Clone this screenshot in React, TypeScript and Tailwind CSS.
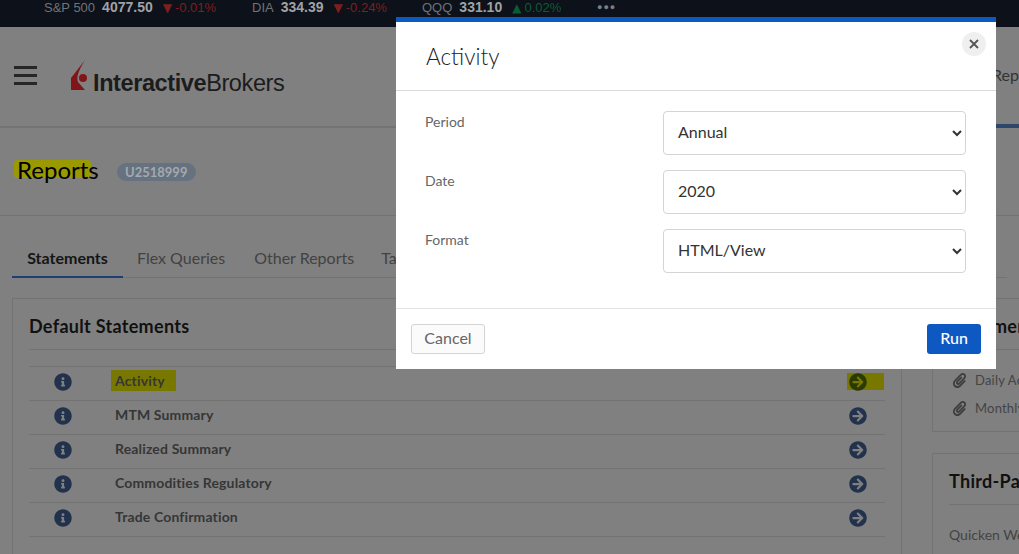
import { FaInfoCircle, FaArrowCircleRight, FaPaperclip } from "react-icons/fa";

const font = "font-['Lato','Noto_Sans',sans-serif]";

function Tick(p: { n: string; v: string; c: string; pct: string; up?: boolean; w: string }) {
  return (
    <div className={`flex items-center ${p.w}`}>
      <span className="text-[#6f7379] mr-[7px]">{p.n}</span>
      <span className="text-[#a0a2a5] text-[14px] font-bold mr-[10px]">{p.v}</span>
      <span className={p.c}>
        <span className="text-[12px] mr-[3px] font-['DejaVu_Sans',sans-serif]">{p.up ? "▲" : "▼"}</span>
        {p.pct}
      </span>
    </div>
  );
}

function Row(p: { label: string; hl?: boolean }) {
  return (
    <div className="h-[34px] border-b border-[#737373] flex items-center pb-[4px]">
      <FaInfoCircle className="ml-[25px] text-[#22324c] text-[18px]" />
      <span className={`ml-[39px] text-[14px] font-bold tracking-[0.15px] text-[#363636] -mt-[3px] px-[4px] -mx-[4px] ${p.hl ? "bg-[#787800] pr-[11px]" : ""}`}>{p.label}</span>
      <div className="ml-auto mr-[1px] flex items-center h-[17px]">
        <div className={`w-[37px] h-[17px] flex items-center ${p.hl ? "bg-[#787800]" : ""}`}>
          <FaArrowCircleRight className={`ml-[2px] text-[18px] ${p.hl ? "text-[#2b3a00]" : "text-[#22324c]"}`} />
        </div>
      </div>
    </div>
  );
}

function Field(p: { label: string; value: string; opts: string[] }) {
  return (
    <div className="flex h-[44px] mb-[15px]">
      <label className="w-[267px] pl-[29px] text-[14px] text-[#666]">{p.label}</label>
      <select defaultValue={p.value} className="w-[303px] h-[44px] border border-[#d4d4d4] rounded-[4px] bg-white pl-[10px] pb-[3px] text-[16px] text-[#333]">
        {p.opts.map((o) => <option key={o}>{o}</option>)}
      </select>
    </div>
  );
}

export default function App() {
  return (
    <div className={`w-[1019px] h-[554px] overflow-hidden relative bg-[#808080] ${font}`}>
      <div className="h-[27px] bg-[#0d1119] flex pl-[44px] pt-[0px] text-[13px] leading-[15px] font-['Liberation_Sans',sans-serif]">
        <Tick n="S&P 500" v="4077.50" c="text-[#7d1f1f]" pct="-0.01%" w="w-[208px] h-[15px]" />
        <Tick n="DIA" v="334.39" c="text-[#7d1f1f]" pct="-0.24%" w="w-[170px] h-[15px]" />
        <Tick n="QQQ" v="331.10" c="text-[#0b5c35]" pct="0.02%" up w="w-[175px] h-[15px]" />
        <span className="text-[#7d7f82] text-[9px] font-bold tracking-[1px]">●●●</span>
      </div>

      <header className="h-[101px] border-b-2 border-[#737373] flex items-center relative">
        <div className="ml-[14px] w-[23px] flex flex-col gap-[5px] -mt-[3px]">
          <div className="h-[3px] bg-[#262626]" />
          <div className="h-[3px] bg-[#262626]" />
          <div className="h-[3px] bg-[#262626]" />
        </div>
        <div className="flex items-end ml-[34px] mt-[4px]">
          <svg width="18" height="31" viewBox="0 0 18 31" className="mb-[7px]">
            <path d="M14 0 L0 18 L0 30 L14 30 L7 22 Q4 16 14 0 Z" fill="#80151a" />
            <circle cx="12" cy="18" r="4" fill="#80151a" />
          </svg>
          <span className="ml-[4px] text-[23.5px] leading-[30px] tracking-[-0.4px] text-[#1c1c1c] font-['Liberation_Sans',sans-serif]"><span className="font-bold">Interactive</span>Brokers</span>
        </div>
        <div className="ml-auto self-stretch w-[27px] border-b-[4px] border-[#2d466a] -mb-[2px] pt-[36px] text-[16px] text-[#333] whitespace-nowrap">Rep</div>
      </header>

      <div className="h-[88px] border-b border-[#737373] flex items-center pl-[17px] pb-[3px]">
        <h1 className="relative text-[24px] leading-[30px] text-black font-normal">
          <span className="absolute left-[-3px] top-[5px] w-[77px] h-[18px] bg-[#9a9a00] rounded-sm" />
          <span className="relative">Reports</span>
        </h1>
        <span className="ml-[18px] mt-[4px] h-[18px] w-[79px] rounded-full bg-[#66727f] text-[#a3a9b0] text-[13px] font-bold leading-[18px] text-center">U2518999</span>
      </div>

      <nav className="h-[62px] mx-[12px] border-b border-[#737373] flex items-end text-[16px] text-[#424242]">
        <div className="w-[111px] h-[36px] border-b-2 border-[#1f3f70] -mb-px text-center font-bold text-[#151515] leading-[32px]">Statements</div>
        <div className="ml-[14px] h-[36px] leading-[33px]">Flex Queries</div>
        <div className="ml-[29px] h-[36px] leading-[33px]">Other Reports</div>
        <div className="ml-[27px] h-[36px] leading-[33px]">Tax</div>
      </nav>

      <main className="flex mt-[20px] ml-[12px] gap-[30px]">
        <section className="w-[890px] h-[300px] border border-[#737373] px-[16px] shrink-0">
          <h2 className="h-[51px] border-b border-[#737373] text-[18px] font-bold text-[#111] leading-[54px] tracking-[0.3px]">Default Statements</h2>
          <div className="h-[17px] border-b border-[#737373]" />
          <Row label="Activity" hl />
          <Row label="MTM Summary" />
          <Row label="Realized Summary" />
          <Row label="Commodities Regulatory" />
          <Row label="Trade Confirmation" />
        </section>
        <div className="w-[300px] shrink-0 flex flex-col gap-[21px]">
          <section className="h-[134px] border border-[#737373] px-[16px]">
            <h2 className="h-[51px] border-b border-[#737373] text-[18px] font-bold text-[#111] leading-[54px] tracking-[0.3px]">Statements</h2>
            <div className="pt-[21px] text-[13px] tracking-[0.2px] text-[#444] flex flex-col gap-[9px]">
              <div className="flex items-center gap-[8px] h-[19px] ml-[3px]"><FaPaperclip className="text-[#3f3f3f] text-[15px]" />Daily Activity</div>
              <div className="flex items-center gap-[8px] h-[19px] ml-[3px]"><FaPaperclip className="text-[#3f3f3f] text-[15px]" />Monthly Activity</div>
            </div>
          </section>
          <section className="h-[120px] border border-[#737373] px-[16px]">
            <h2 className="h-[51px] border-b border-[#737373] text-[18px] font-bold text-[#111] leading-[54px] tracking-[0.3px]">Third-Party Downloads</h2>
            <div className="pt-[19px] text-[14px] text-[#444]">Quicken Web Connect</div>
          </section>
        </div>
      </main>

      <div className="absolute left-[396px] top-[17px] w-[600px] h-[352px] bg-white border-t-[5px] border-[#0d58c1] flex flex-col">
        <div className="h-[69px] border-b border-[#d9d9d9] pl-[30px] relative shrink-0">
          <h3 className="text-[22.5px] leading-[30px] pt-[20px] font-light text-[#222]">Activity</h3>
          <div className="absolute right-[10px] top-[10px] w-[24px] h-[24px] rounded-full bg-[#efefef] flex items-center justify-center text-[#555]">
            <svg width="10" height="10" viewBox="0 0 10 10" stroke="currentColor" strokeWidth="1.8" fill="none"><path d="M1 1 L9 9 M9 1 L1 9" /></svg>
          </div>
        </div>
        <div className="flex-1 pt-[20px]">
          <Field label="Period" value="Annual" opts={["Annual", "Monthly", "Daily"]} />
          <Field label="Date" value="2020" opts={["2020", "2019", "2018"]} />
          <Field label="Format" value="HTML/View" opts={["HTML/View", "PDF", "CSV"]} />
        </div>
        <div className="h-[61px] border-t border-[#e4e4e4] flex items-center justify-between px-[15px] shrink-0">
          <button className="w-[74px] h-[30px] border border-[#d4d4d4] rounded-[3px] bg-[#fbfbfb] text-[16px] text-[#666] pb-[2px]">Cancel</button>
          <button className="w-[54px] h-[30px] rounded-[3px] bg-[#0d58c1] text-[16px] font-medium text-white pb-[2px]">Run</button>
        </div>
      </div>
    </div>
  );
}
